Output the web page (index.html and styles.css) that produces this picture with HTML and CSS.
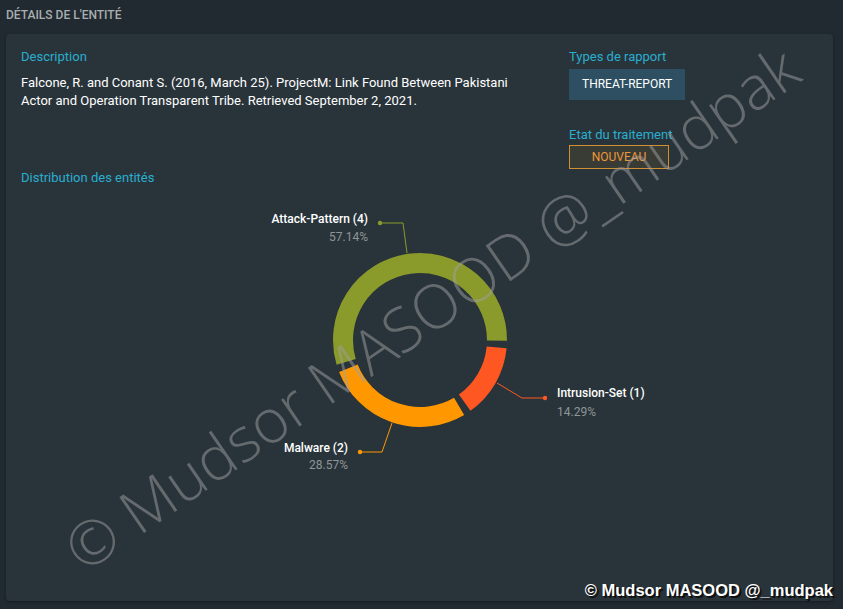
FILE: index.html
```html
<!DOCTYPE html>
<html lang="fr">
<head>
<meta charset="utf-8">
<title>Détails de l'entité</title>
<link rel="stylesheet" href="styles.css">
</head>
<body>
<div class="page">
  <h2 class="section-title">Détails de l'entité</h2>
  <div class="card">
    <div class="top">
      <div class="col-left">
        <div class="label label-desc">Description</div>
        <p class="desc">Falcone, R. and Conant S. (2016, March 25). ProjectM: Link Found Between Pakistani Actor and Operation Transparent Tribe. Retrieved September 2, 2021.</p>
      </div>
      <div class="col-right">
        <div class="label">Types de rapport</div>
        <span class="chip-type">THREAT-REPORT</span>
        <div class="label label-etat">Etat du traitement</div>
        <span class="chip-status">NOUVEAU</span>
      </div>
    </div>
    <div class="label label-dist">Distribution des entités</div>
    <svg class="chart" width="797" height="401" viewBox="0 0 797 401">
      <g fill="none" stroke-width="20">
        <path d="M325.17 176.87 A77 77 0 1 1 476.00 155.67" stroke="#8a9a2b"/>
        <path d="M475.65 162.38 A77 77 0 0 1 443.71 217.69" stroke="#ff5722"/>
        <path d="M438.08 221.35 A77 77 0 0 1 327.36 183.22" stroke="#ff9800"/>
      </g>
      <g fill="none" stroke-width="1">
        <polyline points="359,38 382,38 386,68" stroke="#8a9a2b"/>
        <polyline points="524,213 501,213 476,198" stroke="#ff5722"/>
        <polyline points="339,267 361,267 371,238" stroke="#ff9800"/>
      </g>
      <circle cx="359" cy="38" r="2.2" fill="#8a9a2b"/>
      <circle cx="524" cy="213" r="2.2" fill="#ff5722"/>
      <circle cx="339" cy="267" r="2.2" fill="#ff9800"/>
      <g class="lbl">
        <text x="347" y="38" text-anchor="end" class="name">Attack-Pattern (4)</text>
        <text x="347" y="56" text-anchor="end" class="pct">57.14%</text>
        <text x="536" y="212" class="name">Intrusion-Set (1)</text>
        <text x="536" y="231" class="pct">14.29%</text>
        <text x="327" y="267" text-anchor="end" class="name">Malware (2)</text>
        <text x="327" y="284" text-anchor="end" class="pct">28.57%</text>
      </g>
    </svg>
  </div>
  <div class="watermark">© Mudsor MASOOD @_mudpak</div>
  <div class="stamp">© Mudsor MASOOD @_mudpak</div>
</div>
</body>
</html>
```
FILE: styles.css
```css
html, body {
  margin: 0;
  padding: 0;
  background: #212a30;
}
body {
  font-family: Roboto, "Liberation Sans", Arial, sans-serif;
  color: #ffffff;
  overflow: hidden;
}
.page {
  position: relative;
  height: 609px;
  box-sizing: border-box;
  padding: 0 10px 8px 6px;
  display: flex;
  flex-direction: column;
  overflow: hidden;
}
.section-title {
  margin: 8px 0 12px 0;
  font-size: 12px;
  line-height: 14px;
  font-weight: 500;
  text-transform: uppercase;
  color: #a9aeb1;
}
.card {
  flex: 1;
  background: #29343a;
  border-radius: 4px;
  box-shadow: 0 1px 3px rgba(0, 0, 0, 0.35);
  padding: 15px 15px 0 15px;
  display: flex;
  flex-direction: column;
  overflow: hidden;
}
.top {
  display: grid;
  grid-template-columns: 1fr 249px;
}
.label {
  font-size: 13px;
  line-height: 15px;
  color: #2aaed0;
  margin-bottom: 5px;
}
.label-desc {
  margin-bottom: 10px;
}
.desc {
  margin: 0;
  max-width: 510px;
  font-size: 13px;
  line-height: 18px;
  color: #ffffff;
}
.col-right {
  display: flex;
  flex-direction: column;
  align-items: flex-start;
}
.chip-type {
  display: block;
  height: 31px;
  line-height: 31px;
  padding: 0 13px;
  background: #2e4f62;
  color: #ffffff;
  font-size: 12px;
  margin-bottom: 27px;
}
.label-etat {
  margin-bottom: 3px;
}
.chip-status {
  display: block;
  box-sizing: border-box;
  width: 100px;
  height: 24px;
  line-height: 22px;
  text-align: center;
  border: 1px solid #d18f33;
  background: rgba(255, 152, 0, 0.08);
  color: #ee9739;
  font-size: 12px;
}
.label-dist {
  margin-top: 1px;
  margin-bottom: 0;
}
.chart {
  display: block;
  overflow: visible;
}
.lbl text {
  font-family: Roboto, "Liberation Sans", Arial, sans-serif;
  font-size: 12px;
}
.lbl .name {
  fill: #ffffff;
  font-weight: 500;
}
.lbl .pct {
  fill: #8f9598;
}
.watermark {
  position: absolute;
  left: 431px;
  top: 308px;
  transform: translate(-50%, -50%) rotate(-34.5deg);
  white-space: nowrap;
  font-family: "Open Sans", "DejaVu Sans", sans-serif;
  font-weight: 300;
  font-size: 61px;
  line-height: 70px;
  color: rgba(160, 160, 160, 0.5);
  pointer-events: none;
}
.stamp {
  position: absolute;
  right: 10px;
  bottom: 9px;
  font-family: "Liberation Sans", Arial, sans-serif;
  font-weight: bold;
  font-size: 16.5px;
  line-height: 19px;
  color: #ffffff;
  text-shadow: 1px 1px 0 #111, 2px 2px 0 #111;
  white-space: nowrap;
}
```
